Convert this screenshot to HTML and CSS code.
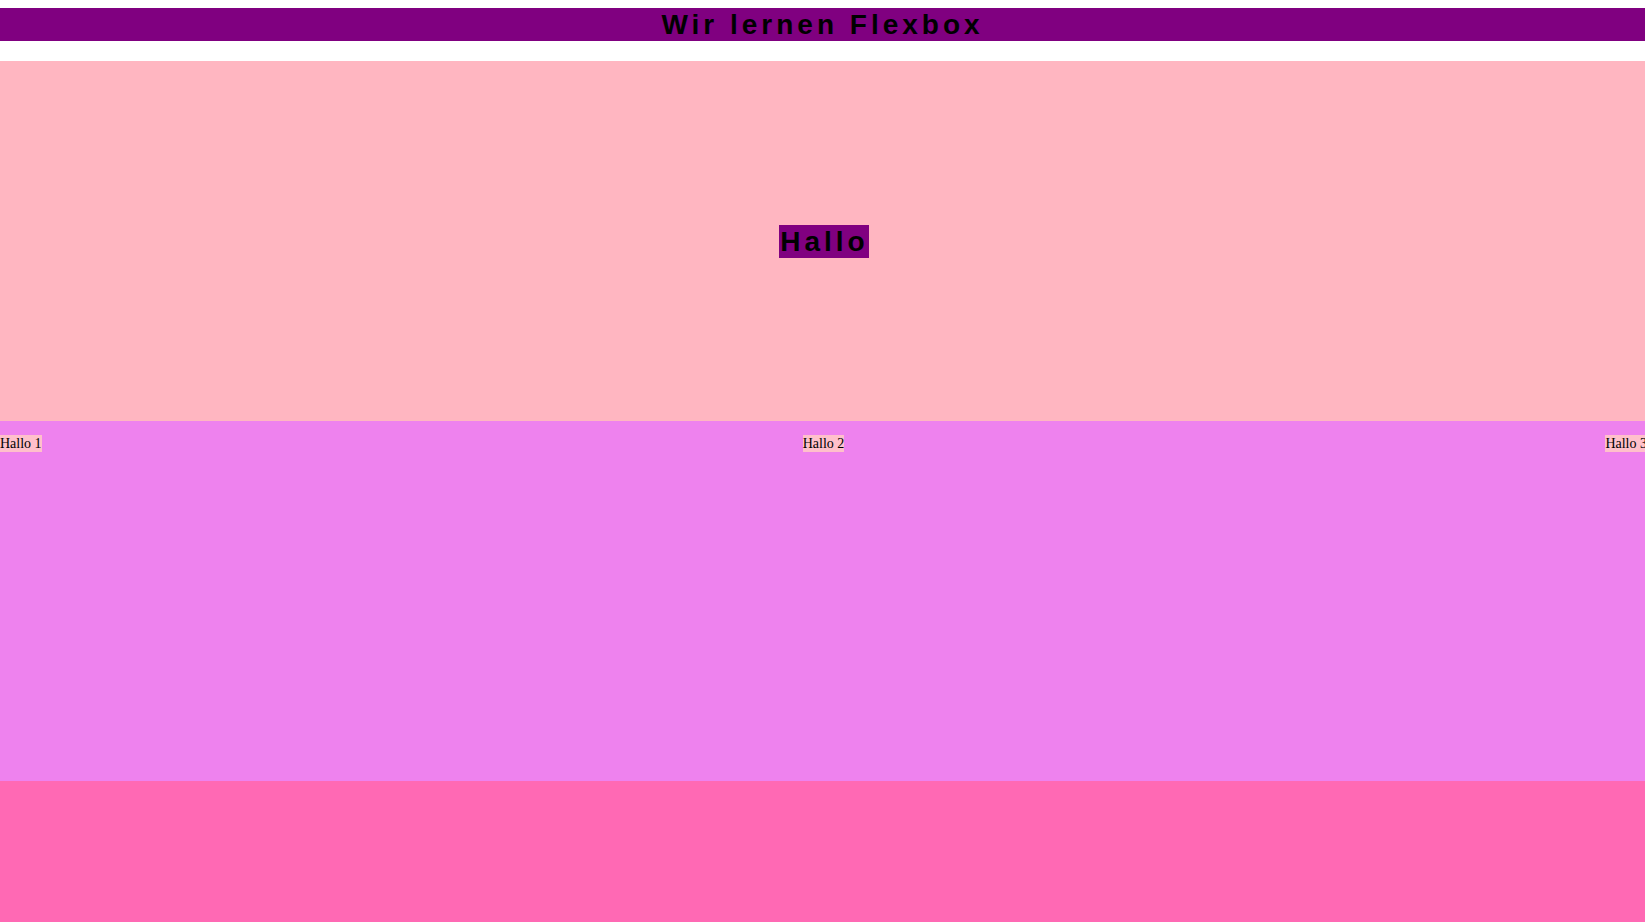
FILE: index.html
```html
<!DOCTYPE html>
<html lang="de">
<head>
<meta charset="utf-8">
<title>Flexbox</title>
<link rel="stylesheet" href="styles.css">
</head>
<body>
<h1 class="title">Wir lernen Flexbox</h1>
<section class="box box-center">
  <h1 class="title hallo">Hallo</h1>
</section>
<section class="box box-row">
  <div class="item">Hallo 1</div>
  <div class="item">Hallo 2</div>
  <div class="item">Hallo 3</div>
</section>
<section class="box box-last"></section>
</body>
</html>
```
FILE: styles.css
```css
html, body {
  margin: 0;
  padding: 0;
  overflow: hidden;
}
body {
  font-family: "Liberation Serif", "Times New Roman", serif;
  font-size: 14px;
  color: #000;
  background: #fff;
}
.title {
  margin: 8px 0 20px;
  background: #800080;
  font-family: "Liberation Sans", Arial, sans-serif;
  font-weight: bold;
  font-size: 28px;
  line-height: 33px;
  letter-spacing: 4px;
  text-align: center;
}
.box {
  height: 360px;
}
.box-center {
  background: #ffb6c1;
  display: flex;
  justify-content: center;
  align-items: center;
}
.hallo {
  margin: 0 0 0 3px;
  padding-left: 1px;
}
.box-row {
  background: #ee82ee;
  display: flex;
  justify-content: space-between;
  align-items: flex-start;
  padding-top: 14px;
  box-sizing: border-box;
  width: calc(100% + 2px);
}
.item {
  background: #ffc0cb;
  line-height: 17px;
}
.box-last {
  background: #ff69b4;
}
```
